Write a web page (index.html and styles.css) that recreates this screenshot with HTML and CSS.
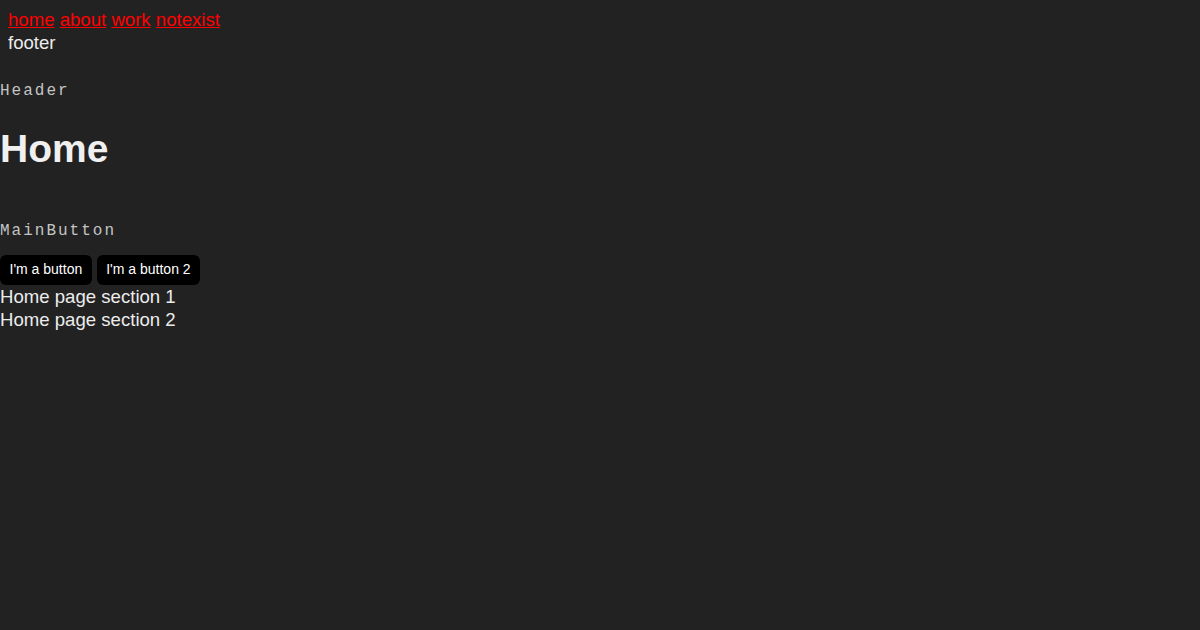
FILE: index.html
```html
<!DOCTYPE html>
<html lang="en">
<head>
  <meta charset="UTF-8">
  <title>Home</title>
  <link rel="stylesheet" href="styles.css">
</head>
<body>
  <div class="layout">
    <nav class="nav">
      <a href="#">home</a>
      <a href="#">about</a>
      <a href="#">work</a>
      <a href="#">notexist</a>
    </nav>
    <div class="footer">footer</div>
  </div>

  <div class="component-name header-name">Header</div>
  <h1 class="page-title">Home</h1>

  <div class="component-name button-name">MainButton</div>
  <div class="buttons">
    <button class="main-btn">I'm a button</button>
    <button class="main-btn">I'm a button 2</button>
  </div>

  <section class="home-section">Home page section 1</section>
  <section class="home-section">Home page section 2</section>
</body>
</html>
```

FILE: styles.css
```css
body {
  margin: 0;
  font-family: "Liberation Sans", Arial, sans-serif;
  font-size: 18.6px;
  line-height: 23px;
  background: #222222;
  color: #ececec;
}

.layout {
  padding: 8px 8px 0;
}

.nav a {
  color: #ff0000;
  text-decoration: underline;
}

.component-name {
  font-family: "Liberation Mono", "Courier New", monospace;
  font-size: 16px;
  line-height: 18px;
  letter-spacing: 2px;
  color: #c4c4c4;
}

.header-name {
  margin-top: 28px;
}

.page-title {
  margin: 27px 0 0;
  font-size: 39px;
  line-height: 44px;
  font-weight: bold;
  color: #f0f0f0;
}

.button-name {
  margin-top: 51px;
}

.buttons {
  display: flex;
  gap: 5px;
  margin-top: 15px;
}

.main-btn {
  font-family: "Liberation Sans", Arial, sans-serif;
  font-size: 14px;
  line-height: 16px;
  padding: 6px 9.5px 8px;
  border: none;
  border-radius: 6px;
  background: #000000;
  color: #ffffff;
  cursor: pointer;
}

.home-section {
  margin: 0;
}
```
